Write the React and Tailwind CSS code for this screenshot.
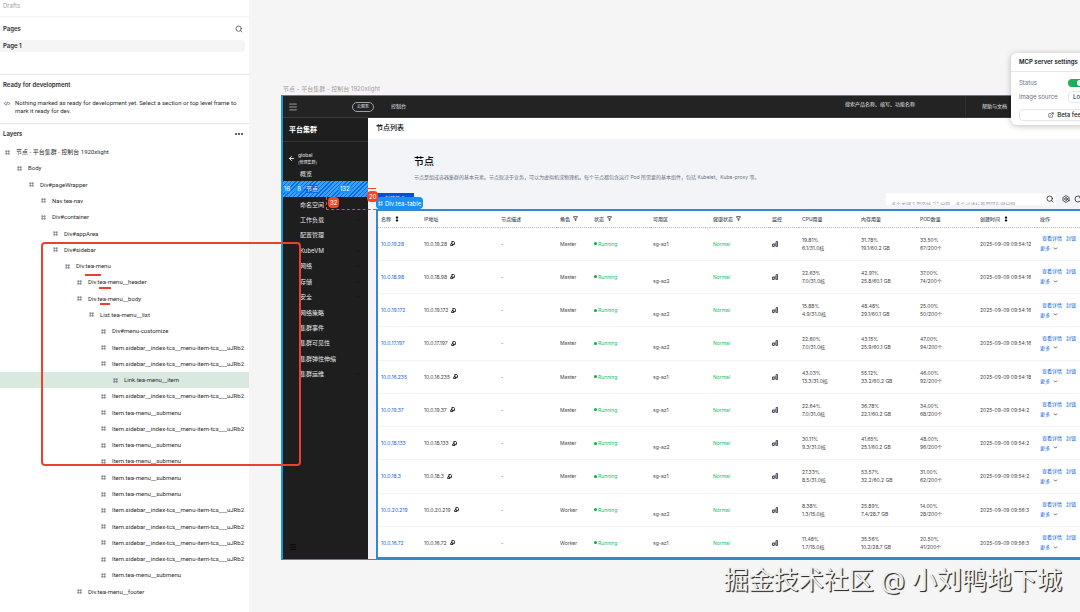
import React from "react";
import { Search, ChevronDown, Bolt, RotateCw, ExternalLink, ArrowLeft, Menu, Filter } from "lucide-react";
import clsx from "clsx";

const MENU_ITEM = "Item.sidebar__index-tcs__menu-item-tcs___uJRb2";
const SUBMENU = "Item.tea-menu__submenu";

const layers = [
  [0, "节点 - 平台集群 - 控制台 1920xlight"],
  [1, "Body"],
  [2, "Div#pageWrapper"],
  [3, "Nav.tea-nav"],
  [3, "Div#container"],
  [4, "Div#appArea"],
  [4, "Div#sidebar"],
  [5, "Div.tea-menu"],
  [6, "Div.tea-menu__header"],
  [6, "Div.tea-menu__body"],
  [7, "List.tea-menu__list"],
  [8, "Div#menu-customize"],
  [8, MENU_ITEM],
  [8, MENU_ITEM],
  [9, "Link.tea-menu__item", true],
  [8, MENU_ITEM],
  [8, SUBMENU],
  [8, MENU_ITEM],
  [8, SUBMENU],
  [8, SUBMENU],
  [8, SUBMENU],
  [8, SUBMENU],
  [8, MENU_ITEM],
  [8, MENU_ITEM],
  [8, MENU_ITEM],
  [8, MENU_ITEM],
  [8, SUBMENU],
  [6, "Div.tea-menu__footer"],
];

const menu = [
  { name: "概览" },
  { name: "节点", selected: true },
  { name: "命名空间" },
  { name: "工作负载", sub: true },
  { name: "配置管理" },
  { name: "KubeVM", sub: true },
  { name: "网络", sub: true },
  { name: "存储", sub: true },
  { name: "安全", sub: true },
  { name: "网络策略" },
  { name: "集群事件" },
  { name: "集群可见性" },
  { name: "集群弹性伸缩" },
  { name: "集群运维", sub: true },
];

const nodes = [
  { ip: "10.0.19.28", role: "Master", zone: "sg-az1", cpu: ["19.81%", "6.1/31.0核"], mem: ["31.78%", "19.1/60.2 GB"], pod: ["33.50%", "67/200个"], time: "2025-09-09 09:54:12" },
  { ip: "10.0.18.98", role: "Master", zone: "sg-az2", cpu: ["22.63%", "7.0/31.0核"], mem: ["42.91%", "25.8/60.1 GB"], pod: ["37.00%", "74/200个"], time: "2025-09-09 09:54:16" },
  { ip: "10.0.19.172", role: "Master", zone: "sg-az2", cpu: ["15.88%", "4.9/31.0核"], mem: ["48.48%", "29.1/60.1 GB"], pod: ["25.00%", "50/200个"], time: "2025-09-09 09:54:16" },
  { ip: "10.0.17.197", role: "Master", zone: "sg-az2", cpu: ["22.60%", "7.0/31.0核"], mem: ["43.15%", "25.9/60.1 GB"], pod: ["47.00%", "94/200个"], time: "2025-09-09 09:54:16" },
  { ip: "10.0.16.235", role: "Master", zone: "sg-az1", cpu: ["43.03%", "13.3/31.0核"], mem: ["55.12%", "33.2/60.2 GB"], pod: ["46.00%", "92/200个"], time: "2025-09-09 09:54:18" },
  { ip: "10.0.19.37", role: "Master", zone: "sg-az1", cpu: ["22.64%", "7.0/31.0核"], mem: ["36.78%", "22.1/60.2 GB"], pod: ["34.00%", "68/200个"], time: "2025-09-09 09:54:2" },
  { ip: "10.0.18.133", role: "Master", zone: "sg-az2", cpu: ["30.11%", "9.3/31.0核"], mem: ["41.65%", "25.1/60.2 GB"], pod: ["48.00%", "96/200个"], time: "2025-09-09 09:54:2" },
  { ip: "10.0.18.3", role: "Master", zone: "sg-az1", cpu: ["27.33%", "8.5/31.0核"], mem: ["53.57%", "32.2/60.2 GB"], pod: ["31.00%", "62/200个"], time: "2025-09-09 09:54:2" },
  { ip: "10.0.20.219", role: "Worker", zone: "sg-az2", cpu: ["8.38%", "1.3/15.0核"], mem: ["25.89%", "7.4/28.7 GB"], pod: ["14.00%", "28/200个"], time: "2025-09-09 09:56:3" },
  { ip: "10.0.16.72", role: "Worker", zone: "sg-az1", cpu: ["11.48%", "1.7/15.0核"], mem: ["35.56%", "10.2/28.7 GB"], pod: ["20.50%", "41/200个"], time: "2025-09-09 09:56:3" },
];

const FrameIcon = ({ className }) => (
  <svg viewBox="0 0 12 12" className={className} fill="none" stroke="currentColor" strokeWidth="1.4" aria-hidden="true">
    <path d="M3 0.5v11M9 0.5v11M0.5 3h11M0.5 9h11" />
  </svg>
);

const SortIcon = () => (
  <svg viewBox="0 0 8 12" className="h-[6px] w-1 text-black" fill="currentColor" aria-hidden="true">
    <path d="M4 0l3 4H5v4h2l-3 4-3-4h2V4H1z" />
  </svg>
);

const CopyIcon = () => (
  <svg viewBox="0 0 12 12" className="ml-px h-[5px] w-[5px] text-black" fill="none" stroke="currentColor" strokeWidth="2" aria-hidden="true">
    <path d="M4.500 1h4.500l2 2v5H4.500zM4.500 4.500L1.500 8v3h5.500V8" />
  </svg>
);

const ChartIcon = () => (
  <svg viewBox="0 0 12 12" className="h-[6px] w-[6px] text-gray-800" fill="none" stroke="currentColor" strokeWidth="1.6" aria-hidden="true">
    <path d="M1 6h3.200v5H1zM6 4v7M8.200 1H11v10H8.200z" />
  </svg>
);

const TwoLines = ({ lines }) => (
  <>
    <div>{lines[0]}</div>
    <div>{lines[1]}</div>
  </>
);

function LayersPanel() {
  return (
    <aside className="flex h-full w-[249px] shrink-0 flex-col bg-white text-[6px] leading-[8px] text-[#2c2c2c]">
      <div className="flex h-[17px] items-center border-b border-gray-100 px-[3px] pb-1 text-neutral-400">Drafts</div>
      <div className="h-[58px] border-b border-gray-200">
        <div className="flex h-[23px] items-center justify-between pr-[6px] pl-[3px]">
          <h2 className="font-semibold">Pages</h2>
          <button aria-label="Search pages">
            <Search className="h-2 w-2" />
          </button>
        </div>
        <button className="mr-1 flex h-3 w-[245px] items-center rounded-r-sm bg-[#f5f5f5] pl-[3px] font-semibold">Page 1</button>
      </div>
      <div className="h-[49px] border-b border-gray-200 pt-[6px] pl-[3px]">
        <h2 className="font-semibold">Ready for development</h2>
        <div className="mt-[10px] flex gap-1">
          <svg viewBox="0 0 16 12" className="mt-[2px] h-[5px] w-2" fill="none" stroke="currentColor" strokeWidth="1.5" aria-hidden="true">
            <path d="M5 2L1.500 6 5 10M11 2l3.500 4L11 10M9 2L7 10" />
          </svg>
          <p className="w-[228px] font-[Roboto,'Noto_Sans_CJK_SC',sans-serif]">
            Nothing marked as ready for development yet. Select a section or top level frame to mark it ready for dev.
          </p>
        </div>
      </div>
      <div className="flex h-5 items-center justify-between pr-[6px] pl-[3px]">
        <h2 className="font-semibold">Layers</h2>
        <button aria-label="More layer options">
          <svg viewBox="0 0 16 4" className="h-[2px] w-2" fill="currentColor" aria-hidden="true">
            <circle cx="2" cy="2" r="2" />
            <circle cx="8" cy="2" r="2" />
            <circle cx="14" cy="2" r="2" />
          </svg>
        </button>
      </div>
      <ul className="flex flex-1 flex-col pb-3">
        {layers.map(([level, name, selected], index) => (
          <li
            key={index}
            className={clsx("flex flex-1 items-center gap-[6px] font-[Roboto,'Noto_Sans_CJK_SC',sans-serif]", selected && "bg-[#d9e9df]")}
            style={{ paddingLeft: `${5 + level * 12}px` }}
          >
            <FrameIcon className="h-[5px] w-[5px] shrink-0 text-gray-600" />
            <span className="whitespace-nowrap">{name}</span>
          </li>
        ))}
      </ul>
    </aside>
  );
}

function TopNav() {
  return (
    <nav className="flex h-[22px] shrink-0 items-center border-b border-[#3a3a3a] bg-[#232323] text-[5px] leading-none text-gray-200">
      <button aria-label="Menu" className="ml-[5px]">
        <Menu className="h-[10px] w-[10px]" strokeWidth={1.5} />
      </button>
      <button className="ml-[54px] h-[10px] w-[22px] rounded-full border border-gray-400 text-[4px]">云服务</button>
      <a href="#console" className="ml-[17px]">控制台</a>
      <div className="ml-auto flex h-full items-center">
        <span className="mb-[5px]">搜索产品名称、缩写、功能名称</span>
        <a href="#docs" className="ml-[50px] flex h-full w-[115px] items-center border-l border-[#303030] pl-4">帮助与文档</a>
      </div>
    </nav>
  );
}

function Sidebar() {
  return (
    <aside className="flex w-[85px] shrink-0 flex-col bg-[#1e1e1e] text-[6px] leading-[8px] text-gray-200">
      <h2 className="flex h-6 items-center border-b border-[#333] pl-[6px] text-[7px] font-bold text-white">平台集群</h2>
      <div className="flex h-[24px] items-center gap-[3px] pt-[9px] pl-[5px]">
        <ArrowLeft className="h-[7px] w-[7px] text-white" strokeWidth={3} />
        <div className="text-[5px] leading-[7px]">
          global
          <div className="text-[4px]">(管理集群)</div>
        </div>
      </div>
      <ul className="flex h-[216px] flex-col">
        {menu.map((item) =>
          item.selected ? (
            <li
              key={item.name}
              className="relative flex flex-1 items-center gap-1 bg-[repeating-linear-gradient(135deg,#0a6be0_0_1px,#3aa0ff_1px_3px)] text-white"
            >
              <span className="rounded-sm bg-[#1595fb] px-px">16</span>
              <span className="rounded-sm bg-[#1595fb] px-[2px]">8</span>
              <a href="#nodes" className="-ml-px bg-[#0a62dd]">{item.name}</a>
              <span className="ml-4 rounded-sm bg-[#1595fb] px-[2px]">132</span>
            </li>
          ) : (
            <li key={item.name} className="flex flex-1 items-center justify-between pr-2 pl-[17px]">
              <a href="#menu">{item.name}</a>
              {item.sub && <ChevronDown className="h-1 w-1 text-black" />}
            </li>
          )
        )}
      </ul>
      <Menu className="mt-auto mb-2 ml-[6px] h-2 w-2 text-black" />
    </aside>
  );
}

const FilterHead = ({ children }) => (
  <span className="flex items-center gap-[3px]">
    {children}
    <Filter className="h-[5px] w-[5px] text-black" strokeWidth={3} />
  </span>
);

function NodeTable() {
  return (
    <table className="h-[349px] w-full table-fixed border-collapse text-left text-[5px] leading-[8px] whitespace-nowrap text-[#444]">
      <colgroup>
        <col className="w-[43px]" />
        <col className="w-[77px]" />
        <col className="w-[59px]" />
        <col className="w-[34px]" />
        <col className="w-[59px]" />
        <col className="w-[60px]" />
        <col className="w-[59px]" />
        <col className="w-[30px]" />
        <col className="w-[59px]" />
        <col className="w-[59px]" />
        <col className="w-[60px]" />
        <col className="w-[60px]" />
        <col />
      </colgroup>
      <thead>
        <tr className="h-4 border-b border-dotted border-[#8cc8f5] text-gray-600 [&>th]:pl-[3px] [&>th]:font-medium">
          <th><span className="flex items-center gap-1">名称 <SortIcon /></span></th>
          <th>IP地址</th>
          <th>节点描述</th>
          <th><FilterHead>角色</FilterHead></th>
          <th><FilterHead>状态</FilterHead></th>
          <th>可用区</th>
          <th><FilterHead>健康状态</FilterHead></th>
          <th>监控</th>
          <th>CPU用量</th>
          <th>内存用量</th>
          <th>POD数量</th>
          <th><span className="flex items-center gap-1">创建时间 <SortIcon /></span></th>
          <th>操作</th>
        </tr>
      </thead>
      <tbody>
        {nodes.map((node) => (
          <tr key={node.ip} className="border-b border-gray-100 [&>td]:pl-[3px]">
            <td><a href="#node" className="text-[#1668dc]">{node.ip}</a></td>
            <td>
              <span className="flex items-center gap-[2px]">
                {node.ip}
                <CopyIcon />
              </span>
            </td>
            <td>-</td>
            <td>{node.role}</td>
            <td className="text-[#0abf5b]">
              <span className="flex items-center gap-px">
                <i className="h-[3px] w-[3px] rounded-full bg-[#0aa650]" />
                Running
              </span>
            </td>
            <td className={clsx(node.zone === "sg-az2" && "pt-2")}>{node.zone}</td>
            <td className="text-[#0abf5b]">Normal</td>
            <td><ChartIcon /></td>
            <td><TwoLines lines={node.cpu} /></td>
            <td><TwoLines lines={node.mem} /></td>
            <td><TwoLines lines={node.pod} /></td>
            <td><div className="w-[51px] overflow-hidden">{node.time}</div></td>
            <td className="pb-px leading-[10px] text-[#0a5fe0]">
              <div className="flex gap-1 pl-[2px]">
                <a href="#detail">查看详情</a>
                <a href="#cordon">封锁</a>
              </div>
              <button className="flex items-center gap-[3px]">
                更多
                <ChevronDown className="h-[5px] w-[5px] text-black" strokeWidth={3} />
              </button>
            </td>
          </tr>
        ))}
      </tbody>
    </table>
  );
}

function NodePage() {
  return (
    <main className="flex min-w-0 flex-1 flex-col bg-[#f2f4f8]">
      <h1 className="flex h-[21px] shrink-0 items-center bg-white pl-2 text-[7px] font-medium text-black">节点列表</h1>
      <div className="h-[54px] shrink-0 pt-[15px] pl-[46px]">
        <h2 className="text-[10px] leading-[14px] font-medium text-black">节点</h2>
        <p className="mt-[5px] text-[5px] leading-[8px] whitespace-nowrap text-gray-500">
          节点是组成容器集群的基本元素。节点取决于业务，可以为虚拟机或物理机。每个节点都包含运行 Pod 所需要的基本组件，包括 Kubelet、Kube-proxy 等。
        </p>
      </div>
      <div className="flex h-4 shrink-0 items-start justify-between pl-2">
        <button className="h-3 w-[38px] bg-[#0052d9] text-[5px] text-white">新建节点</button>
        <div className="-mr-[2px] flex items-center gap-[6px]">
          <div className="flex h-3 w-[170px] items-center bg-white pr-[2px]">
            <input
              aria-label="搜索节点"
              className="h-3 min-w-0 flex-1 pt-[10px] pl-[5px] text-[5px] outline-none placeholder:text-gray-400"
              placeholder='多个关键字用竖线 "|" 分隔，多个过滤标签用回车键分隔'
            />
            <Search className="h-2 w-2 text-black" />
          </div>
          <button aria-label="设置"><Bolt className="h-2 w-2 text-black" /></button>
          <button aria-label="刷新" className="-ml-[2px]"><RotateCw className="h-2 w-2 text-black" /></button>
        </div>
      </div>
      <div className="relative ml-2 min-h-0 flex-1 border-y-2 border-l-2 border-[#3589cb] bg-white">
        <div className="h-full overflow-hidden">
          <NodeTable />
        </div>
        <span className="absolute -top-[14px] -left-[2px] flex h-3 items-center gap-[2px] rounded-sm bg-[#1890f5] px-[2px] text-[6px] text-white">
          <FrameIcon className="h-[5px] w-[5px]" />
          Div.tea-table
        </span>
      </div>
    </main>
  );
}

function McpSettings() {
  return (
    <section className="absolute top-[53px] -right-[52px] w-[121px] rounded-md bg-white text-[6px] leading-[8px] text-gray-900 shadow-[0_1px_6px_rgba(0,0,0,0.25)]">
      <h2 className="flex h-[19px] items-center border-b border-gray-200 px-2 font-semibold">MCP server settings</h2>
      <div className="flex flex-col px-2 pt-[5px] pb-1">
        <label className="flex h-3 items-center text-gray-500">
          <span className="w-[49px]">Status</span>
          <input
            type="checkbox"
            role="switch"
            defaultChecked
            className="h-2 w-4 appearance-none rounded-full bg-[#1fae5b] before:mt-px before:ml-[9px] before:block before:h-[6px] before:w-[6px] before:rounded-full before:bg-white"
          />
        </label>
        <label className="mt-px flex h-[13px] items-center text-gray-500">
          <span className="w-[49px] shrink-0">Image source</span>
          <select className="h-3 flex-1 appearance-none rounded-sm border border-gray-200 bg-white pl-1 text-gray-900">
            <option>Local</option>
          </select>
        </label>
        <button className="mt-[6px] flex h-3 items-center justify-center gap-[3px] rounded-sm border border-gray-200 pl-1 font-medium">
          <ExternalLink className="h-[6px] w-[6px]" />
          Beta feedback
        </button>
      </div>
    </section>
  );
}

// Spacing measurements between the hovered menu item and the table
const Measurements = () => (
  <div className="pointer-events-none text-[6px] leading-[11px] text-white">
    <div className="absolute top-[188px] left-[368px] h-[22px] w-2 border-t border-[#f24822]" />
    <div className="absolute top-[197px] left-[326px] h-[13px] w-[50px] border-b border-l border-dashed border-[#f24822]" />
    <span className="absolute top-[191px] left-[367px] h-[11px] rounded-sm bg-[#f24822] px-[2px]">20</span>
    <span className="absolute top-[197px] left-[328px] h-[11px] rounded-sm bg-[#f24822] px-[2px]">32</span>
  </div>
);

const Annotations = () => (
  <div className="pointer-events-none">
    <div className="absolute top-[242px] left-[41px] h-[224px] w-[260px] rounded-sm border-2 border-[#ea4230]" />
    <div className="absolute top-[274px] left-[85px] h-[2px] w-4 bg-[#ea4230]" />
    <div className="absolute top-[287px] left-[99px] h-[2px] w-3 bg-[#ea4230]" />
    <div className="absolute top-[303px] left-[100px] h-[2px] w-[10px] bg-[#ea4230]" />
  </div>
);

export default function App() {
  return (
    <div className="relative flex h-screen overflow-hidden bg-[#f5f5f5] font-[Inter,'Noto_Sans_CJK_SC',sans-serif]">
      <LayersPanel />
      <div className="flex min-w-0 flex-1 flex-col pt-[84px] pl-8">
        <div className="h-[11px] pl-[2px] text-[6px] leading-[10px] text-neutral-400">节点 - 平台集群 - 控制台 1920xlight</div>
        <div className="flex h-[465px] flex-col border-y border-l-2 border-[#1d93d8]">
          <TopNav />
          <div className="flex min-h-0 flex-1">
            <Sidebar />
            <NodePage />
          </div>
        </div>
      </div>
      <McpSettings />
      <Measurements />
      <Annotations />
      <p className="absolute right-[18px] bottom-[14px] text-[25px] leading-[36px] whitespace-nowrap text-[#f0f0f0] [text-shadow:1px_1px_0_#333,1px_1px_1px_#555]">
        掘金技术社区 @ 小刘鸭地下城
      </p>
    </div>
  );
}
